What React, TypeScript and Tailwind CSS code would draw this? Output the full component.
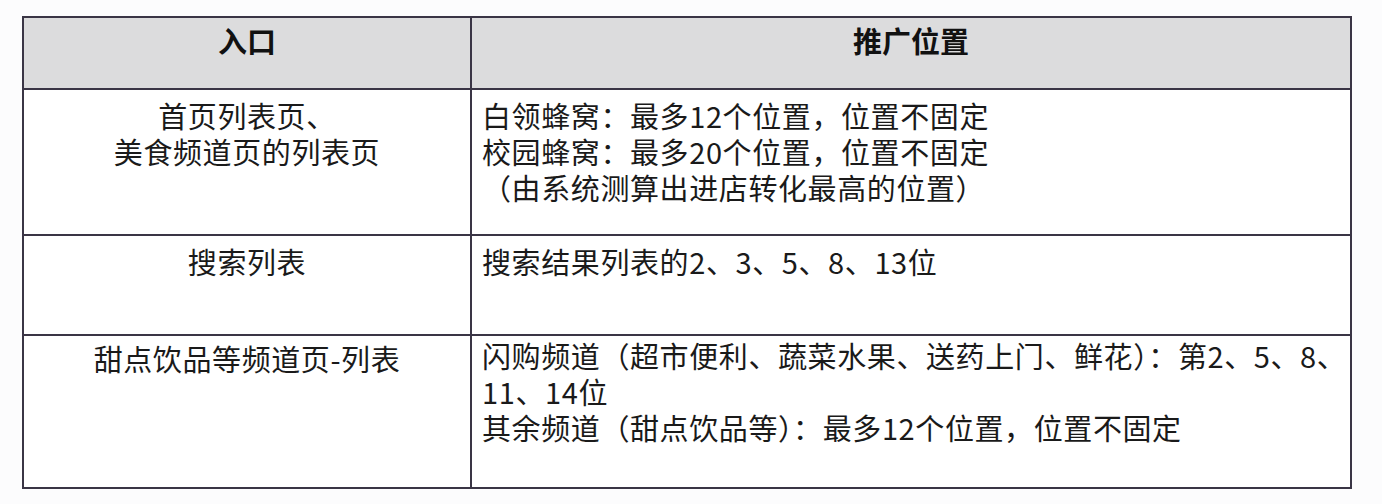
import React from 'react';

const cellText = "text-[29px] leading-[36px] tracking-[0.6px] text-[#1a1a1a]";

const rows = [
  {
    entry: ['首页列表页、', '美食频道页的列表页'],
    place: ['白领蜂窝：最多12个位置，位置不固定', '校园蜂窝：最多20个位置，位置不固定', '（由系统测算出进店转化最高的位置）'],
    height: 'h-[146px]',
    pad: 'pt-[7px]',
    leftPad: 'pt-[7px]',
  },
  {
    entry: ['搜索列表'],
    place: ['搜索结果列表的2、3、5、8、13位'],
    height: 'h-[100px]',
    pad: 'pt-[7px]',
    leftPad: 'pt-[7px]',
  },
  {
    entry: ['甜点饮品等频道页-列表'],
    place: ['闪购频道（超市便利、蔬菜水果、送药上门、鲜花）：第2、5、8、', '11、14位', '其余频道（甜点饮品等）：最多12个位置，位置不固定'],
    height: 'h-[151px]',
    pad: 'pt-[1px]',
    leftPad: 'pt-[4px]',
  },
];

export default function App() {
  return (
    <div
      className="w-[1382px] h-[504px] bg-[#fcfcfd] pt-[16px] pl-[22px]"
      style={{ fontFamily: '"Noto Sans CJK SC", "Noto Sans", sans-serif' }}
    >
      <div className="w-[1330px] border-2 border-[#3a3545] grid grid-cols-[448px_1fr] bg-white">
        {/* header */}
        <div className="h-[72px] bg-[#dcdcdd] border-r-2 border-b-2 border-[#3a3545] text-center pt-[4px]">
          <span className="text-[29px] leading-[36px] font-bold text-[#111]">入口</span>
        </div>
        <div className="h-[72px] bg-[#dcdcdd] border-b-2 border-[#3a3545] text-center pt-[4px]">
          <span className="text-[29px] leading-[36px] font-bold text-[#111]">推广位置</span>
        </div>

        {rows.map((r, i) => {
          const last = i === rows.length - 1;
          return (
            <React.Fragment key={i}>
              <div
                className={`${r.height} ${r.leftPad} border-r-2 border-[#3a3545] text-center ${last ? '' : 'border-b-2'}`}
              >
                {r.entry.map((t) => (
                  <div key={t} className={`${cellText} whitespace-nowrap`}>{t}</div>
                ))}
              </div>
              <div className={`${r.height} ${r.pad} pl-[10px] border-[#3a3545] ${last ? '' : 'border-b-2'}`}>
                {r.place.map((t) => (
                  <div key={t} className={`${cellText} whitespace-nowrap`}>{t}</div>
                ))}
              </div>
            </React.Fragment>
          );
        })}
      </div>
    </div>
  );
}
